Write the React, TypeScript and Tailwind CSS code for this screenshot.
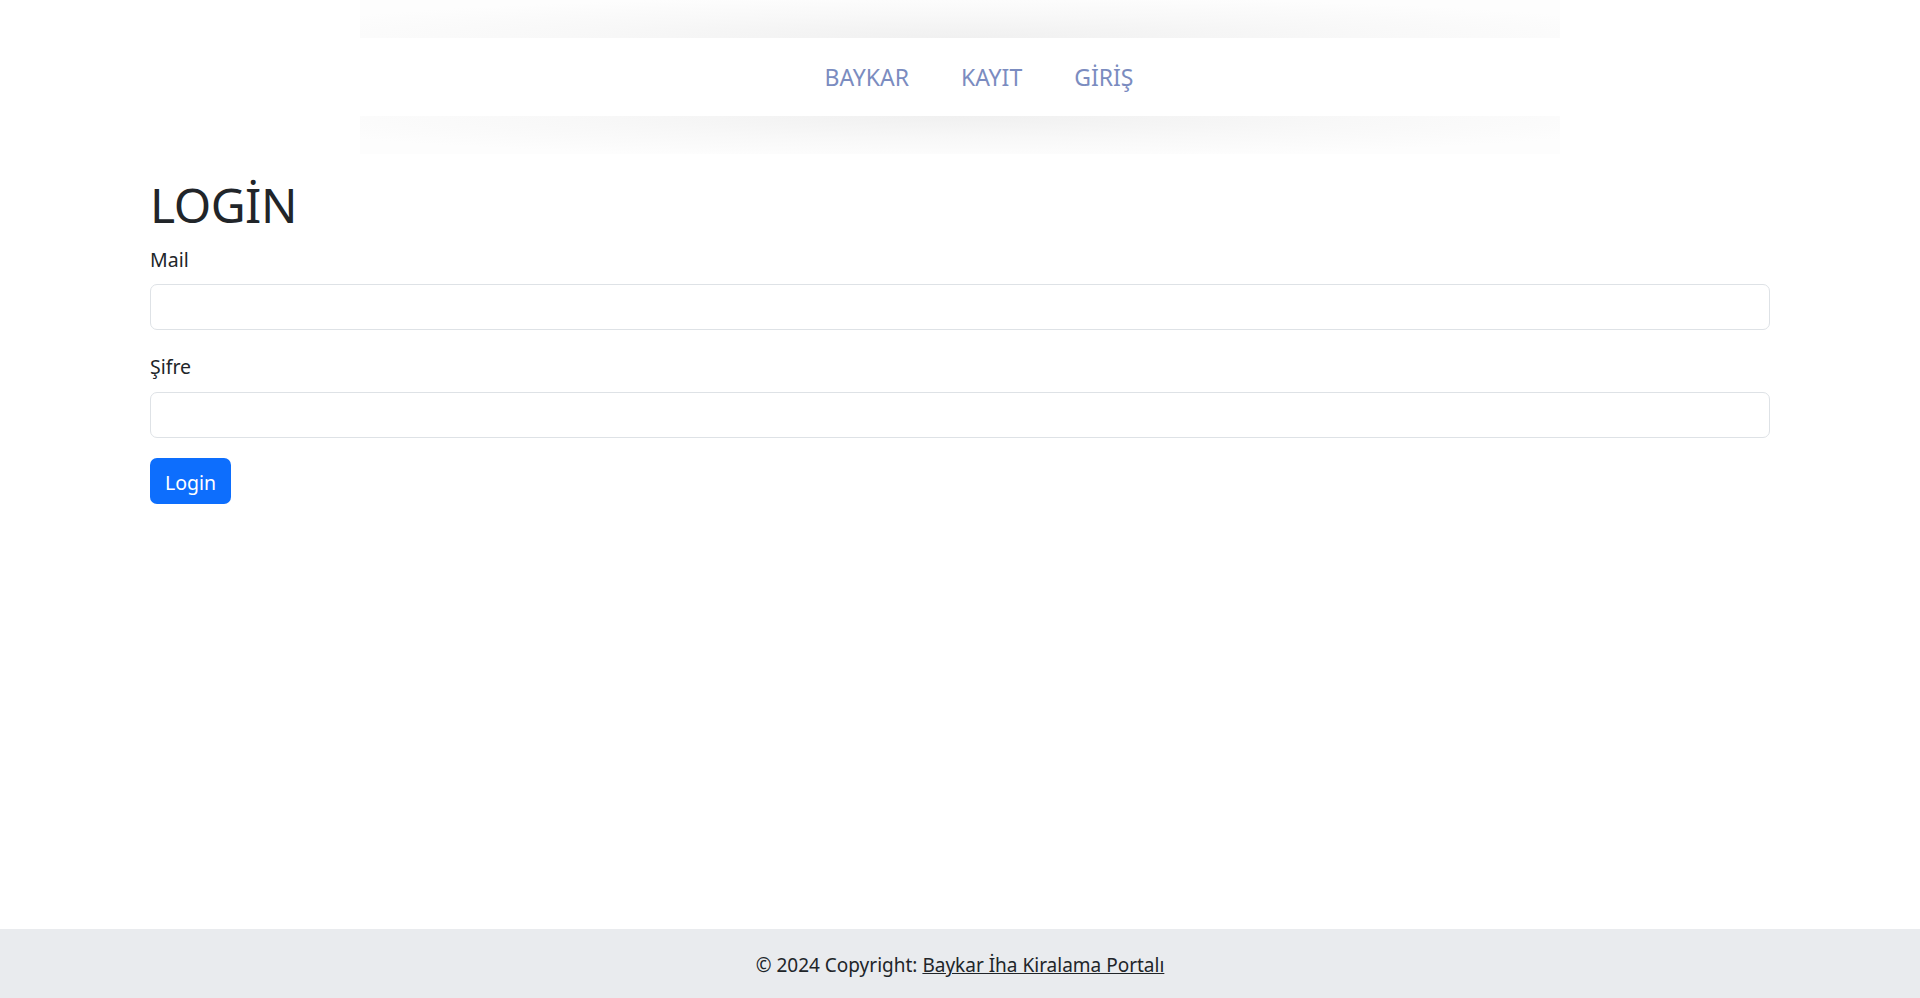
import React from "react";

export default function App() {
  const font = "font-['Noto_Sans','Open_Sans',sans-serif]";
  return (
    <div className={`min-h-screen flex flex-col bg-white text-[#212529] ${font}`}>
      <header className="w-[1200px] mx-auto flex flex-col">
        <div className="h-[38px] bg-[radial-gradient(ellipse_60%_110%_at_50%_100%,#f0f0f0_0%,#f8f8f8_55%,#fdfdfd_100%)]" />
        <nav className="h-[78px] bg-white flex items-center justify-center pl-[38px]">
          <a className="px-[26px] text-[23px] text-[#7b8cc0] leading-none">BAYKAR</a>
          <a className="px-[26px] text-[23px] text-[#7b8cc0] leading-none">KAYIT</a>
          <a className="px-[26px] text-[23px] text-[#7b8cc0] leading-none">GİRİŞ</a>
        </nav>
        <div className="h-[38px] bg-[radial-gradient(ellipse_60%_110%_at_50%_0%,#f0f0f0_0%,#f8f8f8_55%,#fdfdfd_100%)]" />
      </header>

      <main className="flex-1 px-[150px]">
        <h1 className="mt-[21px] text-[48px] leading-[60px] font-normal tracking-[-0.5px]">LOGİN</h1>
        <div className="mt-[10px]">
          <label className="block text-[19.5px] leading-[29px]">Mail</label>
          <input
            type="email"
            className="mt-[10px] block w-full h-[46px] rounded-[7px] border border-[#dee2e6] bg-white px-3 outline-none"
          />
        </div>
        <div className="mt-[22px]">
          <label className="block text-[19.5px] leading-[29px]">Şifre</label>
          <input
            type="password"
            className="mt-[11px] block w-full h-[46px] rounded-[7px] border border-[#dee2e6] bg-white px-3 outline-none"
          />
        </div>
        <button className="mt-[20px] h-[46px] w-[81px] rounded-[7px] bg-[#0d6efd] text-white text-[19.5px] leading-none pt-[3px]">
          Login
        </button>
      </main>

      <footer className="h-[69px] bg-[#e9ebee] flex items-center justify-center text-[19px] pt-[4px]">
        <span>
          © 2024 Copyright: <a className="underline text-[#212529]">Baykar İha Kiralama Portalı</a>
        </span>
      </footer>
    </div>
  );
}
